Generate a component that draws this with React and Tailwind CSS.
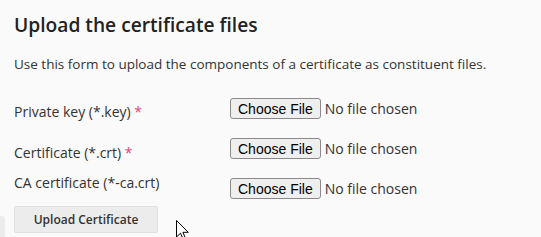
import React from "react";

const fields = [
  { label: "Private key (*.key)", required: true, offset: "mt-[4px]" },
  { label: "Certificate (*.crt)", required: true, offset: "mt-[5px]" },
  { label: "CA certificate (*-ca.crt)", required: false, offset: "-mt-[5px]" },
];

const FileInput = () => (
  <div className="flex items-center h-[21px]">
    <button
      type="button"
      className="h-[21px] px-[7px] bg-[#efefef] border border-[#8a8a8a] rounded-[3px] font-['Liberation_Sans',Arial,sans-serif] text-[14px] leading-none text-black"
    >
      Choose File
    </button>
    <span className="ml-[4px] text-[14px] text-[#333]">No file chosen</span>
  </div>
);

const App = () => {
  return (
    <div className="relative min-h-screen overflow-hidden bg-[#fafafa] font-['Open_Sans',sans-serif] text-[#333] pl-[14px] pt-[13px]">
      <h2 className="text-[19.2px] leading-[24px] font-semibold text-[#222]">Upload the certificate files</h2>
      <p className="mt-[17px] text-[13.5px] leading-[20px]">
        Use this form to upload the components of a certificate as constituent files.
      </p>

      <div className="mt-[24px] flex flex-col gap-[19px]">
        {fields.map((f) => (
          <div key={f.label} className="flex items-start h-[21px]">
            <label className={`w-[216px] text-[14px] leading-[20px] ${f.offset}`}>
              {f.label}
              {f.required && <span className="text-[#e0457b]"> *</span>}
            </label>
            <FileInput />
          </div>
        ))}
      </div>

      <button
        type="button"
        className="mt-[7px] w-[144px] h-[27px] bg-[#ececec] border border-[#e0e0e0] rounded-[2px] text-[12px] font-semibold text-[#333]"
      >
        Upload Certificate
      </button>

      <div className="absolute left-0 bottom-0 w-[5px] h-[21px] bg-[#ececec] rounded-tr-[3px]" />

      <svg className="absolute left-[176px] top-[220px]" width="14" height="20" viewBox="0 0 14 20">
        <path d="M0.5 0.5 L0.5 17 L4.5 13.2 L7.3 19.5 L9.6 18.5 L6.9 12.3 L12.3 12.3 Z" fill="#fff" stroke="#000" strokeWidth="1" />
      </svg>
    </div>
  );
};

export default App;
